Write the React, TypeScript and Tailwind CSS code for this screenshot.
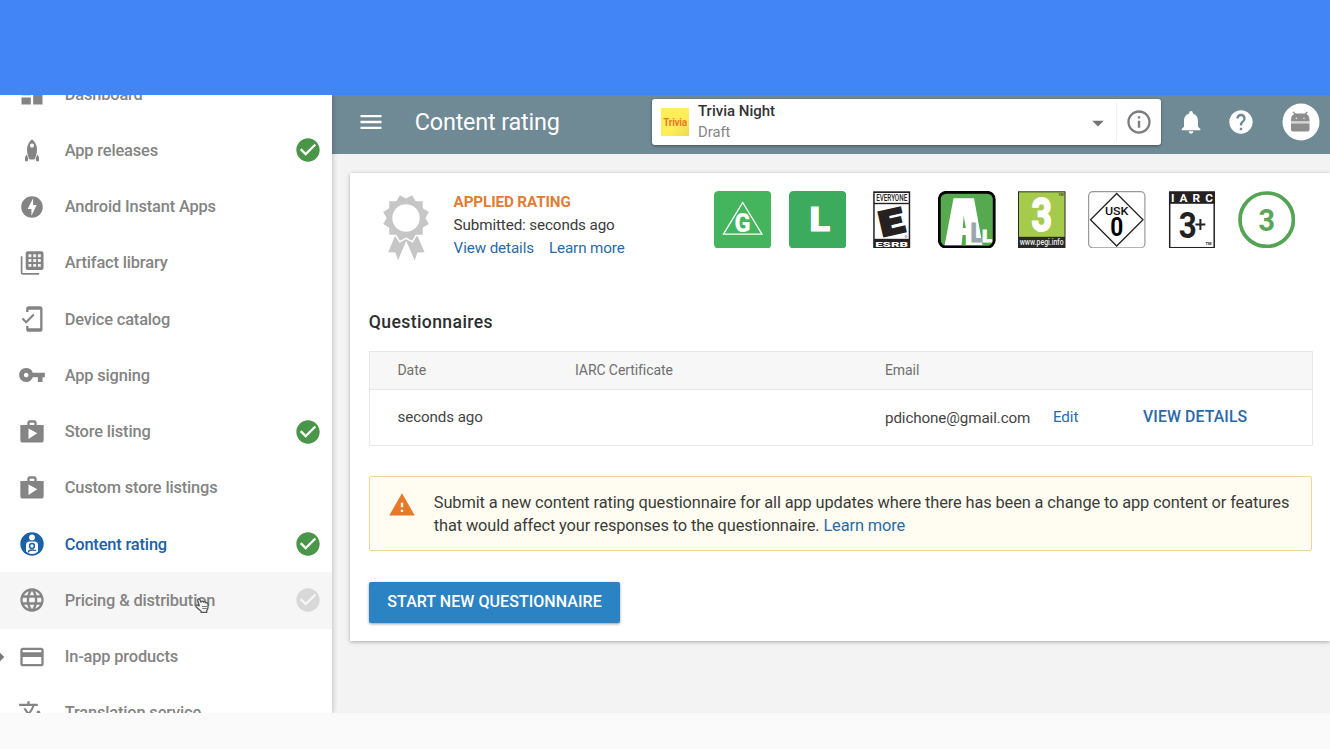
import type { ReactNode } from 'react';
import {
  MdArrowDropDown,
  MdCheckCircle,
  MdCreditCard,
  MdDashboard,
  MdHelp,
  MdInfoOutline,
  MdLanguage,
  MdMenu,
  MdMobileFriendly,
  MdNotifications,
  MdOfflineBolt,
  MdShop,
  MdTranslate,
  MdVpnKey,
  MdWarning,
} from 'react-icons/md';

function RocketIcon() {
  return (
    <svg width="28" height="28" viewBox="0 0 28 28" fill="currentColor">
      <path
        fillRule="evenodd"
        d="M14 3.200c3 2.500 5 6 5 10 0 4-1 7.400-2.600 10.200h-4.800c-1.600-2.800-2.600-6.200-2.600-10.200 0-4 2-7.500 5-10Zm0 4.300a2.100 2.100 0 1 0 0 4.200 2.100 2.100 0 0 0 0-4.200Z"
      />
      <path d="M8.800 18.500 7 21v4.200h2.600l.8-2.400ZM19.200 18.500 21 21v4.200h-2.600l-.8-2.400Z" />
    </svg>
  );
}

function LibraryIcon() {
  return (
    <svg width="28" height="28" viewBox="0 0 28 28" fill="none">
      <path d="M3.600 7.200v16.200q0 1.400 1.400 1.400h16.200" stroke="currentColor" strokeWidth="1.700" />
      <rect x="7.700" y="2.300" width="17.800" height="18.600" rx="2" fill="currentColor" />
      <path
        d="M10.500 5.300h2.900v2.900h-2.900zM15.200 5.300h2.900v2.900h-2.900zM19.900 5.300h2.900v2.900h-2.900zM10.500 10.100h2.900v2.900h-2.900zM15.200 10.100h2.900v2.900h-2.900zM19.900 10.100h2.900v2.900h-2.900zM10.500 14.900h2.900v2.900h-2.900zM15.200 14.900h2.900v2.900h-2.900zM19.900 14.900h2.900v2.900h-2.900z"
        fill="#f4f4f4"
      />
    </svg>
  );
}

function RatingIcon() {
  return (
    <svg width="28" height="28" viewBox="0 0 28 28" fill="none">
      <circle cx="14" cy="14" r="11.700" fill="currentColor" />
      <circle cx="14" cy="7.400" r="2.900" fill="#fff" />
      <path d="M8 21.500v-6.500q0-3.600 3.600-3.600h4.800q3.600 0 3.600 3.600v6.500q-2.500 2.500-6 2.500t-6-2.500Z" fill="#fff" />
      <circle cx="14" cy="16" r="2.400" stroke="currentColor" strokeWidth="1.500" />
      <path d="M10.400 22.600q0-2.600 3.600-2.600t3.600 1" stroke="currentColor" strokeWidth="1.500" />
    </svg>
  );
}

function MedalIcon() {
  const points = Array.from({ length: 24 }, (_, i) => {
    const r = i % 2 === 0 ? 23.6 : 19.4;
    const a = ((15 + i * 15) * Math.PI) / 180;
    return `${(25 + r * Math.cos(a)).toFixed(2)},${(25 + r * Math.sin(a)).toFixed(2)}`;
  }).join(' ');
  return (
    <svg width="50" height="70" viewBox="0 0 50 70" className="shrink-0">
      <path
        d="M14 43 7.200 59.200l7.200.2 2.600 8L25.200 48l8.600 19.400 2.600-8 7.200-.2L36.500 43Z"
        fill="#c6c6c6"
      />
      <polygon points={points} fill="#c6c6c6" stroke="#fff" strokeWidth="3" paintOrder="stroke" />
      <circle cx="25" cy="25" r="13.700" fill="#fff" />
    </svg>
  );
}

type NavItem = { label: string; icon: ReactNode; status?: 'done' | 'pending'; active?: boolean; hover?: boolean };

const NAV: NavItem[] = [
  { label: 'Dashboard', icon: <MdDashboard size={28} /> },
  { label: 'App releases', icon: <RocketIcon />, status: 'done' },
  { label: 'Android Instant Apps', icon: <MdOfflineBolt size={26} /> },
  { label: 'Artifact library', icon: <LibraryIcon /> },
  { label: 'Device catalog', icon: <MdMobileFriendly size={28} /> },
  { label: 'App signing', icon: <MdVpnKey size={28} /> },
  { label: 'Store listing', icon: <MdShop size={28} />, status: 'done' },
  { label: 'Custom store listings', icon: <MdShop size={28} /> },
  { label: 'Content rating', icon: <RatingIcon />, status: 'done', active: true },
  { label: 'Pricing & distribution', icon: <MdLanguage size={28} />, status: 'pending', hover: true },
  { label: 'In-app products', icon: <MdCreditCard size={28} /> },
  { label: 'Translation service', icon: <MdTranslate size={28} /> },
];

function HandCursor() {
  return (
    <svg width="17" height="18" viewBox="0 0 17 18" className="absolute left-[193.500px] top-[24px]">
      <path
        d="M5.200 9.500 3.700 4.800q-.3-1.500.8-1.800t1.700 1.200l.9 2.200q0-1.200 1.200-1.300 1 0 1.300.9 1.700-.8 2.300.8 1.900-.3 2.100 1.500v3q0 1.800-1.300 3.300v1.800H7.200v-1.200L2.200 11q-.9-1.300.2-1.900 1-.5 1.800.4Z"
        fill="#f4f4f4"
        stroke="#555"
        strokeWidth="1.300"
      />
      <path d="M8 10.500h5M8.300 12.500h4.500" stroke="#777" />
    </svg>
  );
}

function Sidebar() {
  return (
    <nav className="relative z-10 w-[332px] shrink-0 overflow-hidden bg-white shadow-[1px_0_5px_rgba(0,0,0,0.2)]">
      <div className="-mt-[29px] flex flex-col">
        {NAV.map((item) => (
          <div
            key={item.label}
            className={`relative flex h-[56.25px] shrink-0 items-center pl-[18.400px] pr-[9.800px] ${item.active ? 'text-[#1b61a5]' : 'text-[#848484]'} ${item.hover ? 'bg-[#f6f6f6]' : ''}`}
          >
            {item.label === 'In-app products' && (
              <span className="absolute -left-[3.500px] top-[25px] size-[6px] rotate-45 bg-[#777]" />
            )}
            <span className="flex w-7 justify-center">{item.icon}</span>
            <span className="ml-[18.300px] flex-1 whitespace-nowrap pt-[1.400px] text-[16.400px] font-medium tracking-[-0.150px]">
              {item.label}
            </span>
            {item.status && (
              <MdCheckCircle size={28} className={item.status === 'done' ? 'text-[#499648]' : 'text-[#d8d8d8]'} />
            )}
            {item.hover && <HandCursor />}
          </div>
        ))}
      </div>
    </nav>
  );
}

function AndroidAvatar() {
  return (
    <svg width="38" height="38" viewBox="0 0 38 38" className="shrink-0">
      <circle cx="19" cy="19" r="18.500" fill="#fff" />
      <path d="m11 9 3.500 3M25.500 9l-3.500 3" stroke="#8d8d8d" strokeWidth="1.300" />
      <path d="M9 18.600V17q0-6.500 5.500-6.500h7.500q5.500 0 5.500 6.500v1.600Z" fill="#8d8d8d" />
      <circle cx="14.400" cy="15.400" r=".8" fill="#ddd" />
      <circle cx="22" cy="15.400" r=".8" fill="#ddd" />
      <path d="M9 18.600h18.500v2H9z" fill="#d4d4d4" />
      <path d="M9 20.600h18.500v6.200q0 1.800-1.800 1.800H10.800q-1.800 0-1.800-1.800Z" fill="#8d8d8d" />
    </svg>
  );
}

function TopBar() {
  return (
    <header className="flex h-[59px] shrink-0 items-start bg-[#6f8995] pl-[25px] text-white">
      <MdMenu size={28} className="mt-[13px] shrink-0" />
      <h1 className="ml-[29.700px] mt-[9px] w-[237.300px] whitespace-nowrap text-[23.400px] leading-9 tracking-[-0.180px]">
        Content rating
      </h1>
      <div className="mt-[4px] flex h-[46px] w-[509px] shrink-0 items-center rounded-[3px] bg-white pl-[9px] shadow-[0_1px_3px_rgba(0,0,0,0.4)]">
        <div className="flex size-[28px] items-center justify-center bg-linear-to-br from-[#ffee58] from-60% to-[#ead94d] text-[10px] font-bold tracking-[-0.3px] text-[#ea7b2c]">
          Trivia
        </div>
        <div className="ml-[9px] flex flex-1 flex-col text-[15px] leading-[21px]">
          <span className="font-medium text-[#333]">Trivia Night</span>
          <span className="text-[14.800px] text-[#858585]">Draft</span>
        </div>
        <MdArrowDropDown size={28} className="mt-[2px] text-[#757575]" />
        <div className="ml-[4px] flex h-[38px] w-[45px] items-center justify-center border-l border-[#eee]">
          <MdInfoOutline size={28} className="text-[#7d7d7d]" />
        </div>
      </div>
      <MdNotifications size={28} className="ml-[16px] mt-[13px] shrink-0" />
      <MdHelp size={28} className="ml-[22.500px] mt-[13px] shrink-0" />
      <div className="ml-[27px] mt-[8px]">
        <AndroidAvatar />
      </div>
    </header>
  );
}

function Badge({ children }: { children: ReactNode }) {
  return (
    <svg width="57.500" height="57.500" viewBox="0 0 57.500 57.500" className="shrink-0" textAnchor="middle">
      {children}
    </svg>
  );
}

function Badges() {
  return (
    <div className="flex gap-[17.350px]">
      <Badge>
        <rect width="57.500" height="57.500" rx="4.500" fill="#44b55c" />
        <path d="M28.700 11.500 48 43.200H9.500Z" fill="none" stroke="#fff" strokeWidth="1.300" />
        <text x="28.500" y="40.600" fontSize="25" fontWeight="900" fill="#fff" stroke="#44b55c" strokeWidth="1.500" paintOrder="stroke" textLength="16" lengthAdjust="spacingAndGlyphs">
          G
        </text>
      </Badge>
      <Badge>
        <rect width="57.500" height="57.500" rx="4.500" fill="#3dab5e" />
        <text x="30.700" y="40.300" fontSize="33.500" fontWeight="900" fill="#fff" stroke="#fff" strokeWidth="1" textLength="20.500" lengthAdjust="spacingAndGlyphs">
          L
        </text>
      </Badge>
      <Badge>
        <rect x="10.200" y=".3" width="37" height="57" fill="#252122" />
        <rect x="11.700" y="2" width="34" height="9.800" fill="#fff" />
        <text x="28.700" y="10" fontSize="8.800" fontWeight="500" fill="#252122" textLength="31" lengthAdjust="spacingAndGlyphs">
          EVERYONE
        </text>
        <rect x="11.700" y="13.200" width="34" height="34.600" fill="#fff" />
        <text x="28" y="43" fontSize="34" fontWeight="900" fill="#252122" stroke="#252122" strokeWidth="2.500" transform="rotate(-13 28.700 30)" textLength="24" lengthAdjust="spacingAndGlyphs">
          E
        </text>
        <circle cx="43" cy="45.500" r="1" fill="none" stroke="#555" strokeWidth=".5" />
        <text x="28.700" y="55.500" fontSize="8" fontWeight="900" fill="#fff" textLength="33" lengthAdjust="spacingAndGlyphs">
          ESRB
        </text>
      </Badge>
      <Badge>
        <rect x="1.300" y="1.300" width="54.900" height="54.900" rx="7" fill="#56a94f" stroke="#000" strokeWidth="2.800" />
        <path fillRule="evenodd" d="M15.500 7.300H36L44.500 54H27.800V44H24.500L23.600 54H6.700ZM25.700 25 24.700 37h3.200Z" fill="#fff" />
        <text x="38.500" y="50.600" fontSize="26" fontWeight="900" fill="#9ba5b1" stroke="#9ba5b1" strokeWidth="1" textLength="11.500" lengthAdjust="spacingAndGlyphs">
          L
        </text>
        <text x="49" y="51" fontSize="16" fontWeight="900" fill="#fff" stroke="#fff" strokeWidth="1" textLength="9.500" lengthAdjust="spacingAndGlyphs">
          L
        </text>
      </Badge>
      <Badge>
        <rect x="5" y=".3" width="47.500" height="57" fill="#292929" />
        <rect x="6" y="1.300" width="45.500" height="44.500" fill="#a6cb4c" />
        <text x="28.700" y="39.800" fontSize="46" fontWeight="700" fill="#fff" stroke="#fff" strokeWidth="2" textLength="20.500" lengthAdjust="spacingAndGlyphs">
          3
        </text>
        <text x="48" y="4.500" fontSize="3.500" fontWeight="500" fill="#333">
          TM
        </text>
        <text x="28.700" y="53.800" fontSize="8.600" fontWeight="500" fill="#eee" textLength="44" lengthAdjust="spacingAndGlyphs">
          www.pegi.info
        </text>
      </Badge>
      <Badge>
        <rect x=".6" y=".6" width="56.300" height="56.300" rx="4.500" fill="#fff" stroke="#999" strokeWidth="1.200" />
        <path d="M28.700 2.500 55 28.700 28.700 55 2.500 28.700Z" fill="#fff" stroke="#222" strokeWidth="1.300" />
        <text x="28.700" y="24.300" fontSize="11.500" fontWeight="500" fill="#111" textLength="23.500" lengthAdjust="spacingAndGlyphs">
          USK
        </text>
        <text x="28.700" y="44.500" fontSize="25" fontWeight="700" fill="#000" textLength="13" lengthAdjust="spacingAndGlyphs">
          0
        </text>
      </Badge>
      <Badge>
        <rect x="6.700" y="1.200" width="44.500" height="55.500" fill="#fff" stroke="#222" strokeWidth="1.500" />
        <rect x="6" y=".5" width="46" height="12.300" fill="#252122" />
        <text x="28.900" y="11" fontSize="11.800" fontWeight="700" fill="#fff" textLength="42">
          IARC
        </text>
        <text x="24.800" y="47" fontSize="36" fontWeight="700" fill="#252122" textLength="18" lengthAdjust="spacingAndGlyphs">
          3
        </text>
        <path d="M32.500 33.400h9.800M37.400 28v11" stroke="#252122" strokeWidth="2" />
        <text x="45.500" y="53.500" fontSize="4" fontWeight="700" fill="#222">
          TM
        </text>
      </Badge>
      <Badge>
        <circle cx="28.700" cy="28.700" r="26.700" fill="#fff" stroke="#55a454" strokeWidth="3.700" />
        <text x="28.700" y="39.800" fontSize="32" fontWeight="700" fill="#5aa659" textLength="16.500" lengthAdjust="spacingAndGlyphs">
          3
        </text>
      </Badge>
    </div>
  );
}

function AppliedRating() {
  return (
    <section className="flex items-start pt-[18.200px]">
      <div className="ml-[12px] mt-[2px]">
        <MedalIcon />
      </div>
      <div className="ml-[22.800px] w-[260.200px] whitespace-nowrap text-[15.200px] leading-[23px] tracking-[-0.110px] text-[#3a3a3a]">
        <p className="font-bold text-[#e27c33]">APPLIED RATING</p>
        <p>Submitted: seconds ago</p>
        <p className="flex gap-[15px] text-[#2a6aa6]">
          <a>View details</a>
          <a>Learn more</a>
        </p>
      </div>
      <Badges />
    </section>
  );
}

function Questionnaires() {
  return (
    <div className="mt-[17px] w-[944px] border border-[#e8e8e8] text-[#444]">
      <div className="flex h-[38px] items-center border-b border-[#e8e8e8] bg-[#f7f7f7] pl-[27.700px] text-[14px] tracking-[-0.080px] text-[#6f6f6f]">
        <span className="w-[177.500px]">Date</span>
        <span className="w-[310px]">IARC Certificate</span>
        <span>Email</span>
      </div>
      <div className="flex h-[54.500px] items-center pl-[27.700px] text-[15.200px] tracking-[-0.110px]">
        <span className="w-[487.500px]">seconds ago</span>
        <span className="w-[168px] pt-[1px]">pdichone@gmail.com</span>
        <a className="w-[90px] text-[#2a6aa6]">Edit</a>
        <a className="pb-[1px] text-[15.800px] font-medium tracking-[0.130px] text-[#2a6aa6]">VIEW DETAILS</a>
      </div>
    </div>
  );
}

export default function App() {
  return (
    <div className="flex h-[749px] w-[1330px] flex-col overflow-hidden bg-[#fafafa] font-[Roboto,sans-serif]">
      <div className="h-[95px] shrink-0 bg-[#4285f6]" />
      <div className="flex h-[617.500px] overflow-hidden bg-[#f3f3f3]">
        <Sidebar />
        <div className="flex w-[998px] flex-col">
          <TopBar />
          <main className="ml-[18px] mt-[18.600px] h-[468.900px] bg-white pl-[18.800px] shadow-[0_1px_4px_rgba(0,0,0,0.3)]">
            <AppliedRating />
            <h2 className="mt-[47.500px] text-[17.600px] font-medium leading-6 tracking-[0.380px] text-[#2e2e2e]">
              Questionnaires
            </h2>
            <Questionnaires />
            <div className="mt-[30.500px] flex h-[75px] w-[943.500px] items-start rounded-[2px] border border-[#f0d49c] bg-[#fffcf2] pl-[18px] pt-[13.500px]">
              <MdWarning size={28} className="shrink-0 text-[#e8792a]" />
              <p className="ml-[18px] whitespace-nowrap text-[16.400px] leading-[23px] tracking-[-0.125px] text-[#3c3c38]">
                Submit a new content rating questionnaire for all app updates where there has been a change to app content or features
                <br />
                that would affect your responses to the questionnaire. <a className="text-[#2a6aa6]">Learn more</a>
              </p>
            </div>
            <button className="mt-[30.300px] h-[41.500px] w-[251.500px] whitespace-nowrap rounded-[2px] bg-[#2b83c3] text-[16px] font-medium tracking-[0.050px] text-white shadow-[0_1px_3px_rgba(0,0,0,0.4)]">
              START NEW QUESTIONNAIRE
            </button>
          </main>
        </div>
      </div>
    </div>
  );
}
